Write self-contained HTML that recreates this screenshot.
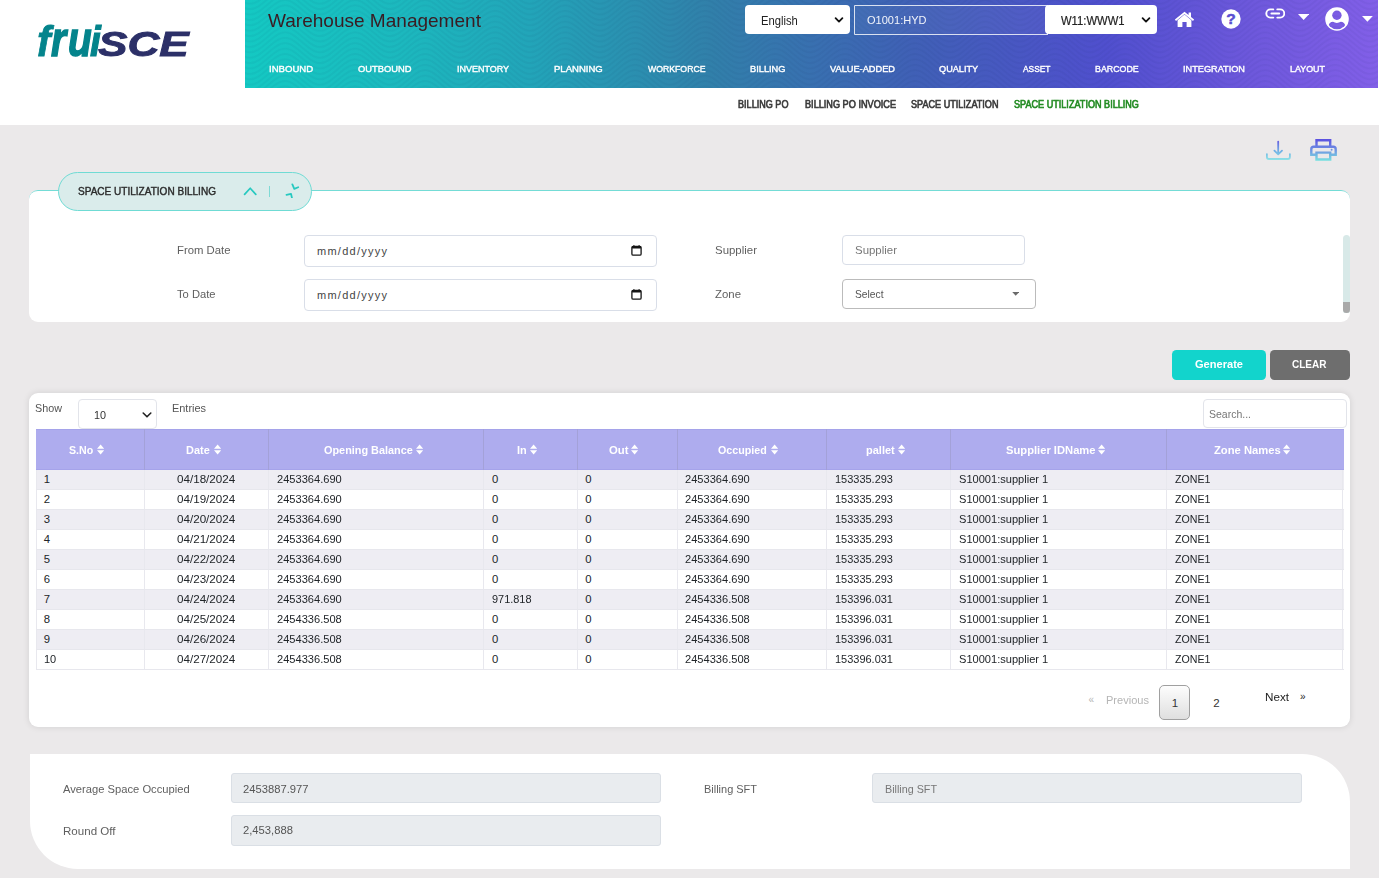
<!DOCTYPE html>
<html lang="en"><head><meta charset="utf-8"><title>Space Utilization Billing</title>
<style>
*{box-sizing:border-box;margin:0;padding:0}
html,body{width:1379px;height:878px;overflow:hidden}
body{position:relative;background:#ebe9ea;font-family:"Liberation Sans",sans-serif;font-size:12px;color:#333}
.t{position:absolute;white-space:nowrap}
.abs{position:absolute}
#top{position:absolute;left:0;top:0;width:1379px;height:124.5px;background:#fff}
#hdr{position:absolute;left:245px;top:0;width:1133px;height:87.5px;
 background:linear-gradient(to right,#14c9c3 0%,#1cb8be 14%,#22a5b9 25%,#3180aa 41%,#4060b6 59%,#504fce 76%,#6e58dc 89%,#825fe8 100%);overflow:hidden}
#hdr svg.wave{position:absolute;left:0;top:0}
.sel{position:absolute;background:#fff;border-radius:4px;height:29px;top:5px}
.card{position:absolute;background:#fff}
.inp{position:absolute;background:#fff;border:1px solid #d9dee8;border-radius:4px}
.ro{position:absolute;background:#e9ecef;border:1px solid #dadfe5;border-radius:3px}
table,thead,tbody,tr,th,td{display:block;position:absolute;border:0;font-weight:400;text-align:left}
h1,a,label,button{font-weight:400;text-decoration:none;color:inherit}
button{border:0;padding:0;font-family:inherit;display:block}
</style></head><body>

<header id="top">
<div class="abs" style="left:0;top:0;font-style:italic;font-weight:700;white-space:nowrap"><span style="position:absolute;left:37.00px;top:20.00px;font-size:43.00px;line-height:1;color:#04848c;transform-origin:0 50%;transform:scaleX(0.950);-webkit-text-stroke:0.80px #04848c">f</span><span style="position:absolute;left:50.80px;top:15.34px;font-size:48.50px;line-height:1;color:#04848c;transform-origin:0 50%;transform:scaleX(0.800);-webkit-text-stroke:1.50px #04848c">r</span><span style="position:absolute;left:67.50px;top:15.34px;font-size:48.50px;line-height:1;color:#04848c;transform-origin:0 50%;transform:scaleX(0.800);-webkit-text-stroke:1.50px #04848c">u</span><span style="position:absolute;left:89.50px;top:20.00px;font-size:43.00px;line-height:1;color:#04848c;transform-origin:0 50%;transform:scaleX(0.900);-webkit-text-stroke:1.20px #04848c">i</span><span style="position:absolute;left:98.00px;top:25.92px;font-size:35.30px;line-height:1;color:#2c3068;transform-origin:0 50%;transform:scaleX(1.250);-webkit-text-stroke:0.90px #2c3068">SCE</span></div>
<div id="hdr">
<svg class="wave" width="1133" height="88"><defs><pattern id="wv" width="70" height="5.4" patternUnits="userSpaceOnUse"><path d="M-30 -27.0 c12 0 23 20 35 20 s23 -20 35 -20 s23 20 35 20M-30 -21.6 c12 0 23 20 35 20 s23 -20 35 -20 s23 20 35 20M-30 -16.2 c12 0 23 20 35 20 s23 -20 35 -20 s23 20 35 20M-30 -10.8 c12 0 23 20 35 20 s23 -20 35 -20 s23 20 35 20M-30 -5.4 c12 0 23 20 35 20 s23 -20 35 -20 s23 20 35 20M-30 0.0 c12 0 23 20 35 20 s23 -20 35 -20 s23 20 35 20M-30 5.4 c12 0 23 20 35 20 s23 -20 35 -20 s23 20 35 20" fill="none" stroke="#00104a" stroke-opacity=".045" stroke-width="2"/></pattern></defs><rect width="1133" height="88" fill="url(#wv)"/></svg>
</div>
<h1 class="t" style="left:268.30px;top:9.20px;font-size:18.40px;line-height:24px;transform-origin:0 50%;transform:scaleX(1.0345);color:#3a1c22;">Warehouse Management</h1>
<nav>
<a class="t" style="left:269.00px;top:61.70px;font-size:9.80px;line-height:14px;transform-origin:0 50%;transform:scaleX(0.9784);color:#fff;-webkit-text-stroke:0.40px #fff;">INBOUND</a>
<a class="t" style="left:358.00px;top:61.70px;font-size:9.80px;line-height:14px;transform-origin:0 50%;transform:scaleX(0.9544);color:#fff;-webkit-text-stroke:0.40px #fff;">OUTBOUND</a>
<a class="t" style="left:456.50px;top:61.70px;font-size:9.80px;line-height:14px;transform-origin:0 50%;transform:scaleX(0.9148);color:#fff;-webkit-text-stroke:0.40px #fff;">INVENTORY</a>
<a class="t" style="left:553.75px;top:61.70px;font-size:9.80px;line-height:14px;transform-origin:0 50%;transform:scaleX(0.9735);color:#fff;-webkit-text-stroke:0.40px #fff;">PLANNING</a>
<a class="t" style="left:647.50px;top:61.70px;font-size:9.80px;line-height:14px;transform-origin:0 50%;transform:scaleX(0.8876);color:#fff;-webkit-text-stroke:0.40px #fff;">WORKFORCE</a>
<a class="t" style="left:749.50px;top:61.70px;font-size:9.80px;line-height:14px;transform-origin:0 50%;transform:scaleX(0.9446);color:#fff;-webkit-text-stroke:0.40px #fff;">BILLING</a>
<a class="t" style="left:829.50px;top:61.70px;font-size:9.80px;line-height:14px;transform-origin:0 50%;transform:scaleX(0.9421);color:#fff;-webkit-text-stroke:0.40px #fff;">VALUE-ADDED</a>
<a class="t" style="left:938.75px;top:61.70px;font-size:9.80px;line-height:14px;transform-origin:0 50%;transform:scaleX(0.9358);color:#fff;-webkit-text-stroke:0.40px #fff;">QUALITY</a>
<a class="t" style="left:1022.50px;top:61.70px;font-size:9.80px;line-height:14px;transform-origin:0 50%;transform:scaleX(0.8555);color:#fff;-webkit-text-stroke:0.40px #fff;">ASSET</a>
<a class="t" style="left:1095.00px;top:61.70px;font-size:9.80px;line-height:14px;transform-origin:0 50%;transform:scaleX(0.9028);color:#fff;-webkit-text-stroke:0.40px #fff;">BARCODE</a>
<a class="t" style="left:1183.20px;top:61.70px;font-size:9.80px;line-height:14px;transform-origin:0 50%;transform:scaleX(0.9359);color:#fff;-webkit-text-stroke:0.40px #fff;">INTEGRATION</a>
<a class="t" style="left:1290.00px;top:61.70px;font-size:9.80px;line-height:14px;transform-origin:0 50%;transform:scaleX(0.9099);color:#fff;-webkit-text-stroke:0.40px #fff;">LAYOUT</a>
</nav>
<nav>
<a class="t" style="left:738.25px;top:98.20px;font-size:10.30px;line-height:14px;transform-origin:0 50%;transform:scaleX(0.8818);color:#3a3a3a;-webkit-text-stroke:0.65px #3a3a3a;">BILLING PO</a>
<a class="t" style="left:804.50px;top:98.20px;font-size:10.30px;line-height:14px;transform-origin:0 50%;transform:scaleX(0.8884);color:#3a3a3a;-webkit-text-stroke:0.65px #3a3a3a;">BILLING PO INVOICE</a>
<a class="t" style="left:910.75px;top:98.20px;font-size:10.30px;line-height:14px;transform-origin:0 50%;transform:scaleX(0.8822);color:#3a3a3a;-webkit-text-stroke:0.65px #3a3a3a;">SPACE UTILIZATION</a>
<a class="t" style="left:1013.75px;top:98.20px;font-size:10.30px;line-height:14px;transform-origin:0 50%;transform:scaleX(0.8829);color:#228b22;-webkit-text-stroke:0.65px #228b22;">SPACE UTILIZATION BILLING</a>
</nav>
<div class="sel" style="left:744.5px;width:105px"></div>
<div class="t" style="left:760.50px;top:12.50px;font-size:12.00px;line-height:16px;transform-origin:0 50%;transform:scaleX(0.9350);color:#222;">English</div>
<svg class="abs" style="left:833px;top:15px" width="12" height="10" viewBox="0 0 12 10"><path d="M2.6 3.2 L6 6.6 L9.4 3.2" fill="none" stroke="#111" stroke-width="1.8" stroke-linecap="round" stroke-linejoin="round"/></svg>
<div class="abs" style="left:854px;top:5px;width:194px;height:29.5px;border:1px solid rgba(255,255,255,.8);border-radius:1px 0 0 1px;background:rgba(255,255,255,.04)"></div>
<div class="t" style="left:867.00px;top:11.80px;font-size:11.50px;line-height:16px;transform-origin:0 50%;transform:scaleX(0.9599);color:#f1f4fb;">O1001:HYD</div>
<div class="sel" style="left:1045.2px;width:111.5px"></div>
<div class="t" style="left:1060.80px;top:12.50px;font-size:12.00px;line-height:16px;transform-origin:0 50%;transform:scaleX(0.9374);color:#222;-webkit-text-stroke:0.20px #222;">W11:WWW1</div>
<svg class="abs" style="left:1140px;top:15px" width="12" height="10" viewBox="0 0 12 10"><path d="M2.6 3.2 L6 6.6 L9.4 3.2" fill="none" stroke="#111" stroke-width="1.8" stroke-linecap="round" stroke-linejoin="round"/></svg>
<svg class="abs" style="left:1174.2px;top:10.6px" width="21" height="16.5" viewBox="0 0 21 16.5"><path d="M10.5 3.6 L3.6 9.3 V15.6 a.6.6 0 0 0 .6.6 H8.4 V11 h4.2 v5.2 h4.2 a.6.6 0 0 0 .6-.6 V9.3 Z" fill="#fff"/><path d="M.9 8.6 L10.5 .7 L14.6 4.1 V1.5 h2.4 V6.1 L20.1 8.6 L19 9.9 L10.5 2.9 L2 9.9 Z" fill="#fff"/></svg>
<svg class="abs" style="left:1221.3px;top:9.4px" width="20" height="20" viewBox="0 0 20 20"><circle cx="10" cy="10" r="9.7" fill="#fff"/><text x="10" y="15.4" text-anchor="middle" font-family="Liberation Sans, sans-serif" font-weight="700" font-size="15.5" fill="#5b50d2" stroke="#5b50d2" stroke-width=".5">?</text></svg>
<svg class="abs" style="left:1264.8px;top:8.3px" width="20.6" height="11" viewBox="0 0 20.6 11"><path d="M8.3 1.4 H5.4 a4.1 4.1 0 0 0 0 8.2 H8.3 M12.3 1.4 h2.9 a4.1 4.1 0 0 1 0 8.2 h-2.9 M6.4 5.5 h7.8" fill="none" stroke="#fff" stroke-width="1.9" stroke-linecap="round"/></svg>
<svg class="abs" style="left:1297.6px;top:14px" width="11.2" height="6" viewBox="0 0 11.2 6"><path d="M0 0 H11.2 L5.6 6 Z" fill="#fff"/></svg>
<svg class="abs" style="left:1325.4px;top:7px" width="24" height="24" viewBox="0 0 24 24"><defs><clipPath id="uc"><circle cx="12" cy="12" r="10.3"/></clipPath><mask id="um"><rect width="24" height="24" fill="#000"/><circle cx="12" cy="12" r="11.8" fill="#fff"/><circle cx="11.9" cy="8.2" r="4.7" fill="#000"/><path clip-path="url(#uc)" d="M3.6 24 V19.2 C3.6 16.4 5.6 14.8 8 14.8 C9.2 15.5 10.4 15.9 11.9 15.9 S14.6 15.5 15.8 14.8 C18.2 14.8 20.2 16.4 20.2 19.2 V24 Z" fill="#000"/></mask></defs><rect width="24" height="24" fill="#fff" mask="url(#um)"/></svg>
<svg class="abs" style="left:1362.4px;top:16.2px" width="10.8" height="5.8" viewBox="0 0 10.8 5.8"><path d="M0 0 H10.8 L5.4 5.8 Z" fill="#fff"/></svg>
</header>
<svg class="abs" style="left:1264px;top:138px" width="28" height="24" viewBox="0 0 28 24"><defs><linearGradient id="g1" gradientUnits="userSpaceOnUse" x1="0" y1="2" x2="0" y2="22"><stop offset="0" stop-color="#6658e0"/><stop offset=".55" stop-color="#6fb0e6"/><stop offset="1" stop-color="#8fe3e6"/></linearGradient></defs><path d="M14.2 3.6 V16.2 M10.4 12.6 L14.2 16.4 L18 12.6" fill="none" stroke="url(#g1)" stroke-width="1.8" stroke-linecap="round" stroke-linejoin="round"/><path d="M2.9 16.2 V19 a2 2 0 0 0 2 2 H23.9 a2 2 0 0 0 2-2 V16.2" fill="none" stroke="url(#g1)" stroke-width="1.8" stroke-linecap="round"/></svg>
<svg class="abs" style="left:1309px;top:138px" width="29" height="24" viewBox="0 0 29 24"><defs><linearGradient id="g2" gradientUnits="userSpaceOnUse" x1="0" y1="1" x2="0" y2="23"><stop offset="0" stop-color="#5b4fe0"/><stop offset=".5" stop-color="#6f93e2"/><stop offset="1" stop-color="#78e3e0"/></linearGradient></defs><path d="M7.5 8.7 V2.2 H21.2 V8.7" fill="none" stroke="url(#g2)" stroke-width="2.4"/><path d="M7.5 16.7 H2.3 V11.2 a2.5 2.5 0 0 1 2.5-2.5 H24.2 a2.5 2.5 0 0 1 2.5 2.5 V16.7 H21.2" fill="none" stroke="url(#g2)" stroke-width="2.4"/><path d="M7.5 14.6 H21.2 V21.5 H7.5 Z" fill="none" stroke="url(#g2)" stroke-width="2.4"/><circle cx="22.6" cy="11.8" r="1" fill="#6f93e2"/></svg>
<div class="card" style="left:29px;top:189.5px;width:1321px;height:132px;border-radius:9px 9px 9px 9px;border-top:1.5px solid #74dcd6"></div>
<div class="abs" style="left:1342.5px;top:234.5px;width:7.5px;height:78px;background:#d8e9e8;border-radius:4px 4px 3px 3px"></div>
<div class="abs" style="left:1342.5px;top:302px;width:7.5px;height:10.5px;background:#a9a9a9;border-radius:0 0 4px 4px"></div>
<div class="abs" style="left:58px;top:171.5px;width:254px;height:39px;border-radius:20px;background:#daeceb;border:1.4px solid #6fdbd4"></div>
<div class="t" style="left:78.40px;top:184.80px;font-size:10.30px;line-height:14px;transform-origin:0 50%;transform:scaleX(0.9748);color:#2b2b2b;-webkit-text-stroke:0.40px #2b2b2b;">SPACE UTILIZATION BILLING</div>
<svg class="abs" style="left:243px;top:185px" width="14" height="12" viewBox="0 0 14 12"><path d="M1.6 9.4 L7.2 3.2 L12.8 9.4" fill="none" stroke="#27c9c0" stroke-width="1.7" stroke-linecap="round" stroke-linejoin="round"/></svg>
<div class="abs" style="left:268.5px;top:186px;width:1.4px;height:11.4px;background:#7fdad5"></div>
<svg class="abs" style="left:284px;top:182px" width="16" height="16" viewBox="0 0 16 16"><path d="M8.35 2.4 L10.3 6.9 L14.2 5.25 M2.5 12.8 L7 11.8 L8 16.1" fill="none" stroke="#27c9c0" stroke-width="1.8" stroke-linecap="round" stroke-linejoin="round"/></svg>
<label class="t" style="left:177.00px;top:241.70px;font-size:11.50px;line-height:16px;transform-origin:0 50%;transform:scaleX(0.9846);color:#5f5f5f;">From Date</label>
<label class="t" style="left:177.00px;top:286.00px;font-size:11.50px;line-height:16px;transform-origin:0 50%;transform:scaleX(0.9718);color:#5f5f5f;">To Date</label>
<div class="inp" style="left:303.7px;top:235px;width:353.6px;height:32px"></div>
<div class="inp" style="left:303.7px;top:279px;width:353.6px;height:31.5px"></div>
<div class="t" style="left:317.00px;top:242.70px;font-size:11.00px;line-height:16px;letter-spacing:1.257px;color:#444;">mm/dd/yyyy</div>
<div class="t" style="left:317.00px;top:286.60px;font-size:11.00px;line-height:16px;letter-spacing:1.257px;color:#444;">mm/dd/yyyy</div>
<svg class="abs" style="left:631.1px;top:245.1px" width="11" height="11" viewBox="0 0 11 11"><rect x="0.9" y="1.4" width="9.2" height="8.8" rx="1.3" fill="#fff" stroke="#151515" stroke-width="1.3"/><rect x="0.9" y="1.1" width="9.2" height="2.3" rx=".6" fill="#151515"/><rect x="2.3" y="0.2" width="1.2" height="1.6" fill="#151515"/><rect x="7.5" y="0.2" width="1.2" height="1.6" fill="#151515"/></svg>
<svg class="abs" style="left:631.1px;top:289.1px" width="11" height="11" viewBox="0 0 11 11"><rect x="0.9" y="1.4" width="9.2" height="8.8" rx="1.3" fill="#fff" stroke="#151515" stroke-width="1.3"/><rect x="0.9" y="1.1" width="9.2" height="2.3" rx=".6" fill="#151515"/><rect x="2.3" y="0.2" width="1.2" height="1.6" fill="#151515"/><rect x="7.5" y="0.2" width="1.2" height="1.6" fill="#151515"/></svg>
<label class="t" style="left:715.00px;top:241.80px;font-size:11.50px;line-height:16px;transform-origin:0 50%;transform:scaleX(0.9951);color:#5f5f5f;">Supplier</label>
<label class="t" style="left:715.00px;top:286.00px;font-size:11.50px;line-height:16px;transform-origin:0 50%;transform:scaleX(0.9916);color:#5f5f5f;">Zone</label>
<div class="inp" style="left:842.3px;top:235px;width:183px;height:29.5px"></div>
<div class="t" style="left:854.50px;top:242.30px;font-size:11.50px;line-height:16px;transform-origin:0 50%;transform:scaleX(0.9951);color:#777;">Supplier</div>
<div class="inp" style="left:842.3px;top:279px;width:193.5px;height:29.5px;border-color:#bbb"></div>
<div class="t" style="left:854.50px;top:285.80px;font-size:11.50px;line-height:16px;transform-origin:0 50%;transform:scaleX(0.8915);color:#555;">Select</div>
<svg class="abs" style="left:1011.5px;top:292.2px" width="7.4" height="3.8" viewBox="0 0 9 5"><path d="M0 0 H9 L4.5 5 Z" fill="#6a6a6a"/></svg>
<button class="abs" style="left:1172.3px;top:350.2px;width:93.5px;height:29.5px;background:#12d4cc;border-radius:4.5px"><span class="t" style="left:22.50px;top:5.90px;font-size:11.50px;line-height:16px;transform-origin:0 50%;transform:scaleX(0.9628);font-weight:700;color:#fff;">Generate</span></button>
<button class="abs" style="left:1270.2px;top:350.2px;width:79.8px;height:29.5px;background:#6e6e6e;border-radius:4.5px"><span class="t" style="left:22.30px;top:5.90px;font-size:11.50px;line-height:16px;transform-origin:0 50%;transform:scaleX(0.8708);font-weight:700;color:#fff;">CLEAR</span></button>
<div class="card" style="left:29.2px;top:393.4px;width:1320.8px;height:333.6px;border-radius:9px;box-shadow:0 0 7px rgba(0,0,0,.11)"></div>
<div class="t" style="left:34.60px;top:399.70px;font-size:11.50px;line-height:16px;transform-origin:0 50%;transform:scaleX(0.9373);color:#555;">Show</div>
<div class="inp" style="left:77.5px;top:399px;width:79.5px;height:29.5px;border-color:#e2e4ea"></div>
<div class="t" style="left:94.00px;top:406.50px;font-size:11.50px;line-height:16px;transform-origin:0 50%;transform:scaleX(0.9401);color:#333;">10</div>
<svg class="abs" style="left:140.5px;top:410px" width="12" height="10" viewBox="0 0 12 10"><path d="M2.2 3 L6 6.8 L9.8 3" fill="none" stroke="#222" stroke-width="1.6" stroke-linecap="round" stroke-linejoin="round"/></svg>
<div class="t" style="left:172.00px;top:400.00px;font-size:11.50px;line-height:16px;transform-origin:0 50%;transform:scaleX(0.9507);color:#555;">Entries</div>
<div class="inp" style="left:1203px;top:399px;width:143.5px;height:28.5px;border-color:#e2e4ea"></div>
<div class="t" style="left:1209.00px;top:406.00px;font-size:11.50px;line-height:16px;transform-origin:0 50%;transform:scaleX(0.9130);color:#777;">Search...</div>
<table style="left:35.75px;top:428.50px;width:1307.75px;height:241.40px">
<thead style="left:0;top:0;width:1307.75px;height:41.40px;background:#aeacee;box-shadow:inset 0 1px 0 #a5a3ea,inset 0 -1px 0 #a5a3ea"><tr style="left:0;top:0;width:100%;height:100%">
<th style="left:0.00px;top:0;width:108.50px;height:100%;"><span class="t" style="left:33.00px;top:13.10px;font-size:11.00px;line-height:16px;transform-origin:0 50%;transform:scaleX(0.9669);font-weight:700;color:#fff;">S.No</span><svg class="abs" style="left:61.25px;top:15.70px" width="7.2" height="11" viewBox="0 0 7.2 11"><path d="M0 4.7 L3.6 0.4 L7.2 4.7 Z M0 6.3 L3.6 10.6 L7.2 6.3 Z" fill="#fff"/></svg></th>
<th style="left:108.00px;top:0;width:124.00px;height:100%;box-shadow:inset 1px 0 0 #a3a1d8;"><span class="t" style="left:42.00px;top:13.10px;font-size:11.00px;line-height:16px;transform-origin:0 50%;transform:scaleX(0.9950);font-weight:700;color:#fff;">Date</span><svg class="abs" style="left:70.00px;top:15.70px" width="7.2" height="11" viewBox="0 0 7.2 11"><path d="M0 4.7 L3.6 0.4 L7.2 4.7 Z M0 6.3 L3.6 10.6 L7.2 6.3 Z" fill="#fff"/></svg></th>
<th style="left:232.00px;top:0;width:215.50px;height:100%;box-shadow:inset 1px 0 0 #a3a1d8;"><span class="t" style="left:55.75px;top:13.10px;font-size:11.00px;line-height:16px;transform-origin:0 50%;transform:scaleX(0.9881);font-weight:700;color:#fff;">Opening Balance</span><svg class="abs" style="left:148.05px;top:15.70px" width="7.2" height="11" viewBox="0 0 7.2 11"><path d="M0 4.7 L3.6 0.4 L7.2 4.7 Z M0 6.3 L3.6 10.6 L7.2 6.3 Z" fill="#fff"/></svg></th>
<th style="left:447.50px;top:0;width:93.75px;height:100%;box-shadow:inset 1px 0 0 #a3a1d8;"><span class="t" style="left:33.75px;top:13.10px;font-size:11.00px;line-height:16px;transform-origin:0 50%;transform:scaleX(0.9959);font-weight:700;color:#fff;">In</span><svg class="abs" style="left:47.05px;top:15.70px" width="7.2" height="11" viewBox="0 0 7.2 11"><path d="M0 4.7 L3.6 0.4 L7.2 4.7 Z M0 6.3 L3.6 10.6 L7.2 6.3 Z" fill="#fff"/></svg></th>
<th style="left:541.25px;top:0;width:99.50px;height:100%;box-shadow:inset 1px 0 0 #a3a1d8;"><span class="t" style="left:31.75px;top:13.10px;font-size:11.00px;line-height:16px;transform-origin:0 50%;transform:scaleX(1.0307);font-weight:700;color:#fff;">Out</span><svg class="abs" style="left:54.40px;top:15.70px" width="7.2" height="11" viewBox="0 0 7.2 11"><path d="M0 4.7 L3.6 0.4 L7.2 4.7 Z M0 6.3 L3.6 10.6 L7.2 6.3 Z" fill="#fff"/></svg></th>
<th style="left:640.75px;top:0;width:149.25px;height:100%;box-shadow:inset 1px 0 0 #a3a1d8;"><span class="t" style="left:41.75px;top:13.10px;font-size:11.00px;line-height:16px;transform-origin:0 50%;transform:scaleX(0.9730);font-weight:700;color:#fff;">Occupied</span><svg class="abs" style="left:94.40px;top:15.70px" width="7.2" height="11" viewBox="0 0 7.2 11"><path d="M0 4.7 L3.6 0.4 L7.2 4.7 Z M0 6.3 L3.6 10.6 L7.2 6.3 Z" fill="#fff"/></svg></th>
<th style="left:790.00px;top:0;width:124.50px;height:100%;box-shadow:inset 1px 0 0 #a3a1d8;"><span class="t" style="left:40.00px;top:13.10px;font-size:11.00px;line-height:16px;transform-origin:0 50%;transform:scaleX(1.0014);font-weight:700;color:#fff;">pallet</span><svg class="abs" style="left:71.95px;top:15.70px" width="7.2" height="11" viewBox="0 0 7.2 11"><path d="M0 4.7 L3.6 0.4 L7.2 4.7 Z M0 6.3 L3.6 10.6 L7.2 6.3 Z" fill="#fff"/></svg></th>
<th style="left:914.50px;top:0;width:215.75px;height:100%;box-shadow:inset 1px 0 0 #a3a1d8;"><span class="t" style="left:55.25px;top:13.10px;font-size:11.00px;line-height:16px;transform-origin:0 50%;transform:scaleX(1.0170);font-weight:700;color:#fff;">Supplier IDName</span><svg class="abs" style="left:148.05px;top:15.70px" width="7.2" height="11" viewBox="0 0 7.2 11"><path d="M0 4.7 L3.6 0.4 L7.2 4.7 Z M0 6.3 L3.6 10.6 L7.2 6.3 Z" fill="#fff"/></svg></th>
<th style="left:1130.25px;top:0;width:177.00px;height:100%;box-shadow:inset 1px 0 0 #a3a1d8;"><span class="t" style="left:47.50px;top:13.10px;font-size:11.00px;line-height:16px;transform-origin:0 50%;transform:scaleX(1.0207);font-weight:700;color:#fff;">Zone Names</span><svg class="abs" style="left:117.30px;top:15.70px" width="7.2" height="11" viewBox="0 0 7.2 11"><path d="M0 4.7 L3.6 0.4 L7.2 4.7 Z M0 6.3 L3.6 10.6 L7.2 6.3 Z" fill="#fff"/></svg></th>
</tr></thead>
<tbody style="left:0;top:41.40px;width:1307.75px;height:200.00px">
<tr style="left:0;top:0.00px;width:100%;height:20.00px;background:#eeedf3;border-bottom:1px solid #e7e7ed">
<td style="left:0.00px;top:0;width:108.50px;height:100%;box-shadow:inset 1px 0 0 #e8e8ee;"><span class="t" style="left:8.00px;top:1.30px;font-size:11.30px;line-height:16px;color:#212529;">1</span></td>
<td style="left:108.00px;top:0;width:124.00px;height:100%;box-shadow:inset 1px 0 0 #e8e8ee;"><span class="t" style="left:33.00px;top:1.30px;font-size:11.30px;line-height:16px;transform-origin:0 50%;transform:scaleX(1.0299);color:#212529;">04/18/2024</span></td>
<td style="left:232.00px;top:0;width:215.50px;height:100%;box-shadow:inset 1px 0 0 #e8e8ee;"><span class="t" style="left:9.00px;top:1.30px;font-size:11.30px;line-height:16px;transform-origin:0 50%;transform:scaleX(0.9819);color:#212529;">2453364.690</span></td>
<td style="left:447.50px;top:0;width:93.75px;height:100%;box-shadow:inset 1px 0 0 #e8e8ee;"><span class="t" style="left:8.75px;top:1.30px;font-size:11.30px;line-height:16px;color:#212529;">0</span></td>
<td style="left:541.25px;top:0;width:99.50px;height:100%;box-shadow:inset 1px 0 0 #e8e8ee;"><span class="t" style="left:8.30px;top:1.30px;font-size:11.30px;line-height:16px;color:#212529;">0</span></td>
<td style="left:640.75px;top:0;width:149.25px;height:100%;box-shadow:inset 1px 0 0 #e8e8ee;"><span class="t" style="left:8.20px;top:1.30px;font-size:11.30px;line-height:16px;transform-origin:0 50%;transform:scaleX(0.9819);color:#212529;">2453364.690</span></td>
<td style="left:790.00px;top:0;width:124.50px;height:100%;box-shadow:inset 1px 0 0 #e8e8ee;"><span class="t" style="left:8.75px;top:1.30px;font-size:11.30px;line-height:16px;transform-origin:0 50%;transform:scaleX(0.9712);color:#212529;">153335.293</span></td>
<td style="left:914.50px;top:0;width:215.75px;height:100%;box-shadow:inset 1px 0 0 #e8e8ee;"><span class="t" style="left:8.50px;top:1.30px;font-size:11.30px;line-height:16px;transform-origin:0 50%;transform:scaleX(0.9799);color:#212529;">S10001:supplier 1</span></td>
<td style="left:1130.25px;top:0;width:177.00px;height:100%;box-shadow:inset 1px 0 0 #e8e8ee,inset -1px 0 0 #e8e8ee;"><span class="t" style="left:8.75px;top:1.30px;font-size:11.30px;line-height:16px;transform-origin:0 50%;transform:scaleX(0.9420);color:#212529;">ZONE1</span></td>
</tr>
<tr style="left:0;top:20.00px;width:100%;height:20.00px;background:#ffffff;border-bottom:1px solid #e7e7ed">
<td style="left:0.00px;top:0;width:108.50px;height:100%;box-shadow:inset 1px 0 0 #e8e8ee;"><span class="t" style="left:8.00px;top:1.30px;font-size:11.30px;line-height:16px;color:#212529;">2</span></td>
<td style="left:108.00px;top:0;width:124.00px;height:100%;box-shadow:inset 1px 0 0 #e8e8ee;"><span class="t" style="left:33.00px;top:1.30px;font-size:11.30px;line-height:16px;transform-origin:0 50%;transform:scaleX(1.0299);color:#212529;">04/19/2024</span></td>
<td style="left:232.00px;top:0;width:215.50px;height:100%;box-shadow:inset 1px 0 0 #e8e8ee;"><span class="t" style="left:9.00px;top:1.30px;font-size:11.30px;line-height:16px;transform-origin:0 50%;transform:scaleX(0.9819);color:#212529;">2453364.690</span></td>
<td style="left:447.50px;top:0;width:93.75px;height:100%;box-shadow:inset 1px 0 0 #e8e8ee;"><span class="t" style="left:8.75px;top:1.30px;font-size:11.30px;line-height:16px;color:#212529;">0</span></td>
<td style="left:541.25px;top:0;width:99.50px;height:100%;box-shadow:inset 1px 0 0 #e8e8ee;"><span class="t" style="left:8.30px;top:1.30px;font-size:11.30px;line-height:16px;color:#212529;">0</span></td>
<td style="left:640.75px;top:0;width:149.25px;height:100%;box-shadow:inset 1px 0 0 #e8e8ee;"><span class="t" style="left:8.20px;top:1.30px;font-size:11.30px;line-height:16px;transform-origin:0 50%;transform:scaleX(0.9819);color:#212529;">2453364.690</span></td>
<td style="left:790.00px;top:0;width:124.50px;height:100%;box-shadow:inset 1px 0 0 #e8e8ee;"><span class="t" style="left:8.75px;top:1.30px;font-size:11.30px;line-height:16px;transform-origin:0 50%;transform:scaleX(0.9712);color:#212529;">153335.293</span></td>
<td style="left:914.50px;top:0;width:215.75px;height:100%;box-shadow:inset 1px 0 0 #e8e8ee;"><span class="t" style="left:8.50px;top:1.30px;font-size:11.30px;line-height:16px;transform-origin:0 50%;transform:scaleX(0.9799);color:#212529;">S10001:supplier 1</span></td>
<td style="left:1130.25px;top:0;width:177.00px;height:100%;box-shadow:inset 1px 0 0 #e8e8ee,inset -1px 0 0 #e8e8ee;"><span class="t" style="left:8.75px;top:1.30px;font-size:11.30px;line-height:16px;transform-origin:0 50%;transform:scaleX(0.9420);color:#212529;">ZONE1</span></td>
</tr>
<tr style="left:0;top:40.00px;width:100%;height:20.00px;background:#eeedf3;border-bottom:1px solid #e7e7ed">
<td style="left:0.00px;top:0;width:108.50px;height:100%;box-shadow:inset 1px 0 0 #e8e8ee;"><span class="t" style="left:8.00px;top:1.30px;font-size:11.30px;line-height:16px;color:#212529;">3</span></td>
<td style="left:108.00px;top:0;width:124.00px;height:100%;box-shadow:inset 1px 0 0 #e8e8ee;"><span class="t" style="left:33.00px;top:1.30px;font-size:11.30px;line-height:16px;transform-origin:0 50%;transform:scaleX(1.0299);color:#212529;">04/20/2024</span></td>
<td style="left:232.00px;top:0;width:215.50px;height:100%;box-shadow:inset 1px 0 0 #e8e8ee;"><span class="t" style="left:9.00px;top:1.30px;font-size:11.30px;line-height:16px;transform-origin:0 50%;transform:scaleX(0.9819);color:#212529;">2453364.690</span></td>
<td style="left:447.50px;top:0;width:93.75px;height:100%;box-shadow:inset 1px 0 0 #e8e8ee;"><span class="t" style="left:8.75px;top:1.30px;font-size:11.30px;line-height:16px;color:#212529;">0</span></td>
<td style="left:541.25px;top:0;width:99.50px;height:100%;box-shadow:inset 1px 0 0 #e8e8ee;"><span class="t" style="left:8.30px;top:1.30px;font-size:11.30px;line-height:16px;color:#212529;">0</span></td>
<td style="left:640.75px;top:0;width:149.25px;height:100%;box-shadow:inset 1px 0 0 #e8e8ee;"><span class="t" style="left:8.20px;top:1.30px;font-size:11.30px;line-height:16px;transform-origin:0 50%;transform:scaleX(0.9819);color:#212529;">2453364.690</span></td>
<td style="left:790.00px;top:0;width:124.50px;height:100%;box-shadow:inset 1px 0 0 #e8e8ee;"><span class="t" style="left:8.75px;top:1.30px;font-size:11.30px;line-height:16px;transform-origin:0 50%;transform:scaleX(0.9712);color:#212529;">153335.293</span></td>
<td style="left:914.50px;top:0;width:215.75px;height:100%;box-shadow:inset 1px 0 0 #e8e8ee;"><span class="t" style="left:8.50px;top:1.30px;font-size:11.30px;line-height:16px;transform-origin:0 50%;transform:scaleX(0.9799);color:#212529;">S10001:supplier 1</span></td>
<td style="left:1130.25px;top:0;width:177.00px;height:100%;box-shadow:inset 1px 0 0 #e8e8ee,inset -1px 0 0 #e8e8ee;"><span class="t" style="left:8.75px;top:1.30px;font-size:11.30px;line-height:16px;transform-origin:0 50%;transform:scaleX(0.9420);color:#212529;">ZONE1</span></td>
</tr>
<tr style="left:0;top:60.00px;width:100%;height:20.00px;background:#ffffff;border-bottom:1px solid #e7e7ed">
<td style="left:0.00px;top:0;width:108.50px;height:100%;box-shadow:inset 1px 0 0 #e8e8ee;"><span class="t" style="left:8.00px;top:1.30px;font-size:11.30px;line-height:16px;color:#212529;">4</span></td>
<td style="left:108.00px;top:0;width:124.00px;height:100%;box-shadow:inset 1px 0 0 #e8e8ee;"><span class="t" style="left:33.00px;top:1.30px;font-size:11.30px;line-height:16px;transform-origin:0 50%;transform:scaleX(1.0299);color:#212529;">04/21/2024</span></td>
<td style="left:232.00px;top:0;width:215.50px;height:100%;box-shadow:inset 1px 0 0 #e8e8ee;"><span class="t" style="left:9.00px;top:1.30px;font-size:11.30px;line-height:16px;transform-origin:0 50%;transform:scaleX(0.9819);color:#212529;">2453364.690</span></td>
<td style="left:447.50px;top:0;width:93.75px;height:100%;box-shadow:inset 1px 0 0 #e8e8ee;"><span class="t" style="left:8.75px;top:1.30px;font-size:11.30px;line-height:16px;color:#212529;">0</span></td>
<td style="left:541.25px;top:0;width:99.50px;height:100%;box-shadow:inset 1px 0 0 #e8e8ee;"><span class="t" style="left:8.30px;top:1.30px;font-size:11.30px;line-height:16px;color:#212529;">0</span></td>
<td style="left:640.75px;top:0;width:149.25px;height:100%;box-shadow:inset 1px 0 0 #e8e8ee;"><span class="t" style="left:8.20px;top:1.30px;font-size:11.30px;line-height:16px;transform-origin:0 50%;transform:scaleX(0.9819);color:#212529;">2453364.690</span></td>
<td style="left:790.00px;top:0;width:124.50px;height:100%;box-shadow:inset 1px 0 0 #e8e8ee;"><span class="t" style="left:8.75px;top:1.30px;font-size:11.30px;line-height:16px;transform-origin:0 50%;transform:scaleX(0.9712);color:#212529;">153335.293</span></td>
<td style="left:914.50px;top:0;width:215.75px;height:100%;box-shadow:inset 1px 0 0 #e8e8ee;"><span class="t" style="left:8.50px;top:1.30px;font-size:11.30px;line-height:16px;transform-origin:0 50%;transform:scaleX(0.9799);color:#212529;">S10001:supplier 1</span></td>
<td style="left:1130.25px;top:0;width:177.00px;height:100%;box-shadow:inset 1px 0 0 #e8e8ee,inset -1px 0 0 #e8e8ee;"><span class="t" style="left:8.75px;top:1.30px;font-size:11.30px;line-height:16px;transform-origin:0 50%;transform:scaleX(0.9420);color:#212529;">ZONE1</span></td>
</tr>
<tr style="left:0;top:80.00px;width:100%;height:20.00px;background:#eeedf3;border-bottom:1px solid #e7e7ed">
<td style="left:0.00px;top:0;width:108.50px;height:100%;box-shadow:inset 1px 0 0 #e8e8ee;"><span class="t" style="left:8.00px;top:1.30px;font-size:11.30px;line-height:16px;color:#212529;">5</span></td>
<td style="left:108.00px;top:0;width:124.00px;height:100%;box-shadow:inset 1px 0 0 #e8e8ee;"><span class="t" style="left:33.00px;top:1.30px;font-size:11.30px;line-height:16px;transform-origin:0 50%;transform:scaleX(1.0299);color:#212529;">04/22/2024</span></td>
<td style="left:232.00px;top:0;width:215.50px;height:100%;box-shadow:inset 1px 0 0 #e8e8ee;"><span class="t" style="left:9.00px;top:1.30px;font-size:11.30px;line-height:16px;transform-origin:0 50%;transform:scaleX(0.9819);color:#212529;">2453364.690</span></td>
<td style="left:447.50px;top:0;width:93.75px;height:100%;box-shadow:inset 1px 0 0 #e8e8ee;"><span class="t" style="left:8.75px;top:1.30px;font-size:11.30px;line-height:16px;color:#212529;">0</span></td>
<td style="left:541.25px;top:0;width:99.50px;height:100%;box-shadow:inset 1px 0 0 #e8e8ee;"><span class="t" style="left:8.30px;top:1.30px;font-size:11.30px;line-height:16px;color:#212529;">0</span></td>
<td style="left:640.75px;top:0;width:149.25px;height:100%;box-shadow:inset 1px 0 0 #e8e8ee;"><span class="t" style="left:8.20px;top:1.30px;font-size:11.30px;line-height:16px;transform-origin:0 50%;transform:scaleX(0.9819);color:#212529;">2453364.690</span></td>
<td style="left:790.00px;top:0;width:124.50px;height:100%;box-shadow:inset 1px 0 0 #e8e8ee;"><span class="t" style="left:8.75px;top:1.30px;font-size:11.30px;line-height:16px;transform-origin:0 50%;transform:scaleX(0.9712);color:#212529;">153335.293</span></td>
<td style="left:914.50px;top:0;width:215.75px;height:100%;box-shadow:inset 1px 0 0 #e8e8ee;"><span class="t" style="left:8.50px;top:1.30px;font-size:11.30px;line-height:16px;transform-origin:0 50%;transform:scaleX(0.9799);color:#212529;">S10001:supplier 1</span></td>
<td style="left:1130.25px;top:0;width:177.00px;height:100%;box-shadow:inset 1px 0 0 #e8e8ee,inset -1px 0 0 #e8e8ee;"><span class="t" style="left:8.75px;top:1.30px;font-size:11.30px;line-height:16px;transform-origin:0 50%;transform:scaleX(0.9420);color:#212529;">ZONE1</span></td>
</tr>
<tr style="left:0;top:100.00px;width:100%;height:20.00px;background:#ffffff;border-bottom:1px solid #e7e7ed">
<td style="left:0.00px;top:0;width:108.50px;height:100%;box-shadow:inset 1px 0 0 #e8e8ee;"><span class="t" style="left:8.00px;top:1.30px;font-size:11.30px;line-height:16px;color:#212529;">6</span></td>
<td style="left:108.00px;top:0;width:124.00px;height:100%;box-shadow:inset 1px 0 0 #e8e8ee;"><span class="t" style="left:33.00px;top:1.30px;font-size:11.30px;line-height:16px;transform-origin:0 50%;transform:scaleX(1.0299);color:#212529;">04/23/2024</span></td>
<td style="left:232.00px;top:0;width:215.50px;height:100%;box-shadow:inset 1px 0 0 #e8e8ee;"><span class="t" style="left:9.00px;top:1.30px;font-size:11.30px;line-height:16px;transform-origin:0 50%;transform:scaleX(0.9819);color:#212529;">2453364.690</span></td>
<td style="left:447.50px;top:0;width:93.75px;height:100%;box-shadow:inset 1px 0 0 #e8e8ee;"><span class="t" style="left:8.75px;top:1.30px;font-size:11.30px;line-height:16px;color:#212529;">0</span></td>
<td style="left:541.25px;top:0;width:99.50px;height:100%;box-shadow:inset 1px 0 0 #e8e8ee;"><span class="t" style="left:8.30px;top:1.30px;font-size:11.30px;line-height:16px;color:#212529;">0</span></td>
<td style="left:640.75px;top:0;width:149.25px;height:100%;box-shadow:inset 1px 0 0 #e8e8ee;"><span class="t" style="left:8.20px;top:1.30px;font-size:11.30px;line-height:16px;transform-origin:0 50%;transform:scaleX(0.9819);color:#212529;">2453364.690</span></td>
<td style="left:790.00px;top:0;width:124.50px;height:100%;box-shadow:inset 1px 0 0 #e8e8ee;"><span class="t" style="left:8.75px;top:1.30px;font-size:11.30px;line-height:16px;transform-origin:0 50%;transform:scaleX(0.9712);color:#212529;">153335.293</span></td>
<td style="left:914.50px;top:0;width:215.75px;height:100%;box-shadow:inset 1px 0 0 #e8e8ee;"><span class="t" style="left:8.50px;top:1.30px;font-size:11.30px;line-height:16px;transform-origin:0 50%;transform:scaleX(0.9799);color:#212529;">S10001:supplier 1</span></td>
<td style="left:1130.25px;top:0;width:177.00px;height:100%;box-shadow:inset 1px 0 0 #e8e8ee,inset -1px 0 0 #e8e8ee;"><span class="t" style="left:8.75px;top:1.30px;font-size:11.30px;line-height:16px;transform-origin:0 50%;transform:scaleX(0.9420);color:#212529;">ZONE1</span></td>
</tr>
<tr style="left:0;top:120.00px;width:100%;height:20.00px;background:#eeedf3;border-bottom:1px solid #e7e7ed">
<td style="left:0.00px;top:0;width:108.50px;height:100%;box-shadow:inset 1px 0 0 #e8e8ee;"><span class="t" style="left:8.00px;top:1.30px;font-size:11.30px;line-height:16px;color:#212529;">7</span></td>
<td style="left:108.00px;top:0;width:124.00px;height:100%;box-shadow:inset 1px 0 0 #e8e8ee;"><span class="t" style="left:33.00px;top:1.30px;font-size:11.30px;line-height:16px;transform-origin:0 50%;transform:scaleX(1.0299);color:#212529;">04/24/2024</span></td>
<td style="left:232.00px;top:0;width:215.50px;height:100%;box-shadow:inset 1px 0 0 #e8e8ee;"><span class="t" style="left:9.00px;top:1.30px;font-size:11.30px;line-height:16px;transform-origin:0 50%;transform:scaleX(0.9819);color:#212529;">2453364.690</span></td>
<td style="left:447.50px;top:0;width:93.75px;height:100%;box-shadow:inset 1px 0 0 #e8e8ee;"><span class="t" style="left:8.75px;top:1.30px;font-size:11.30px;line-height:16px;transform-origin:0 50%;transform:scaleX(0.9670);color:#212529;">971.818</span></td>
<td style="left:541.25px;top:0;width:99.50px;height:100%;box-shadow:inset 1px 0 0 #e8e8ee;"><span class="t" style="left:8.30px;top:1.30px;font-size:11.30px;line-height:16px;color:#212529;">0</span></td>
<td style="left:640.75px;top:0;width:149.25px;height:100%;box-shadow:inset 1px 0 0 #e8e8ee;"><span class="t" style="left:8.20px;top:1.30px;font-size:11.30px;line-height:16px;transform-origin:0 50%;transform:scaleX(0.9819);color:#212529;">2454336.508</span></td>
<td style="left:790.00px;top:0;width:124.50px;height:100%;box-shadow:inset 1px 0 0 #e8e8ee;"><span class="t" style="left:8.75px;top:1.30px;font-size:11.30px;line-height:16px;transform-origin:0 50%;transform:scaleX(0.9712);color:#212529;">153396.031</span></td>
<td style="left:914.50px;top:0;width:215.75px;height:100%;box-shadow:inset 1px 0 0 #e8e8ee;"><span class="t" style="left:8.50px;top:1.30px;font-size:11.30px;line-height:16px;transform-origin:0 50%;transform:scaleX(0.9799);color:#212529;">S10001:supplier 1</span></td>
<td style="left:1130.25px;top:0;width:177.00px;height:100%;box-shadow:inset 1px 0 0 #e8e8ee,inset -1px 0 0 #e8e8ee;"><span class="t" style="left:8.75px;top:1.30px;font-size:11.30px;line-height:16px;transform-origin:0 50%;transform:scaleX(0.9420);color:#212529;">ZONE1</span></td>
</tr>
<tr style="left:0;top:140.00px;width:100%;height:20.00px;background:#ffffff;border-bottom:1px solid #e7e7ed">
<td style="left:0.00px;top:0;width:108.50px;height:100%;box-shadow:inset 1px 0 0 #e8e8ee;"><span class="t" style="left:8.00px;top:1.30px;font-size:11.30px;line-height:16px;color:#212529;">8</span></td>
<td style="left:108.00px;top:0;width:124.00px;height:100%;box-shadow:inset 1px 0 0 #e8e8ee;"><span class="t" style="left:33.00px;top:1.30px;font-size:11.30px;line-height:16px;transform-origin:0 50%;transform:scaleX(1.0299);color:#212529;">04/25/2024</span></td>
<td style="left:232.00px;top:0;width:215.50px;height:100%;box-shadow:inset 1px 0 0 #e8e8ee;"><span class="t" style="left:9.00px;top:1.30px;font-size:11.30px;line-height:16px;transform-origin:0 50%;transform:scaleX(0.9819);color:#212529;">2454336.508</span></td>
<td style="left:447.50px;top:0;width:93.75px;height:100%;box-shadow:inset 1px 0 0 #e8e8ee;"><span class="t" style="left:8.75px;top:1.30px;font-size:11.30px;line-height:16px;color:#212529;">0</span></td>
<td style="left:541.25px;top:0;width:99.50px;height:100%;box-shadow:inset 1px 0 0 #e8e8ee;"><span class="t" style="left:8.30px;top:1.30px;font-size:11.30px;line-height:16px;color:#212529;">0</span></td>
<td style="left:640.75px;top:0;width:149.25px;height:100%;box-shadow:inset 1px 0 0 #e8e8ee;"><span class="t" style="left:8.20px;top:1.30px;font-size:11.30px;line-height:16px;transform-origin:0 50%;transform:scaleX(0.9819);color:#212529;">2454336.508</span></td>
<td style="left:790.00px;top:0;width:124.50px;height:100%;box-shadow:inset 1px 0 0 #e8e8ee;"><span class="t" style="left:8.75px;top:1.30px;font-size:11.30px;line-height:16px;transform-origin:0 50%;transform:scaleX(0.9712);color:#212529;">153396.031</span></td>
<td style="left:914.50px;top:0;width:215.75px;height:100%;box-shadow:inset 1px 0 0 #e8e8ee;"><span class="t" style="left:8.50px;top:1.30px;font-size:11.30px;line-height:16px;transform-origin:0 50%;transform:scaleX(0.9799);color:#212529;">S10001:supplier 1</span></td>
<td style="left:1130.25px;top:0;width:177.00px;height:100%;box-shadow:inset 1px 0 0 #e8e8ee,inset -1px 0 0 #e8e8ee;"><span class="t" style="left:8.75px;top:1.30px;font-size:11.30px;line-height:16px;transform-origin:0 50%;transform:scaleX(0.9420);color:#212529;">ZONE1</span></td>
</tr>
<tr style="left:0;top:160.00px;width:100%;height:20.00px;background:#eeedf3;border-bottom:1px solid #e7e7ed">
<td style="left:0.00px;top:0;width:108.50px;height:100%;box-shadow:inset 1px 0 0 #e8e8ee;"><span class="t" style="left:8.00px;top:1.30px;font-size:11.30px;line-height:16px;color:#212529;">9</span></td>
<td style="left:108.00px;top:0;width:124.00px;height:100%;box-shadow:inset 1px 0 0 #e8e8ee;"><span class="t" style="left:33.00px;top:1.30px;font-size:11.30px;line-height:16px;transform-origin:0 50%;transform:scaleX(1.0299);color:#212529;">04/26/2024</span></td>
<td style="left:232.00px;top:0;width:215.50px;height:100%;box-shadow:inset 1px 0 0 #e8e8ee;"><span class="t" style="left:9.00px;top:1.30px;font-size:11.30px;line-height:16px;transform-origin:0 50%;transform:scaleX(0.9819);color:#212529;">2454336.508</span></td>
<td style="left:447.50px;top:0;width:93.75px;height:100%;box-shadow:inset 1px 0 0 #e8e8ee;"><span class="t" style="left:8.75px;top:1.30px;font-size:11.30px;line-height:16px;color:#212529;">0</span></td>
<td style="left:541.25px;top:0;width:99.50px;height:100%;box-shadow:inset 1px 0 0 #e8e8ee;"><span class="t" style="left:8.30px;top:1.30px;font-size:11.30px;line-height:16px;color:#212529;">0</span></td>
<td style="left:640.75px;top:0;width:149.25px;height:100%;box-shadow:inset 1px 0 0 #e8e8ee;"><span class="t" style="left:8.20px;top:1.30px;font-size:11.30px;line-height:16px;transform-origin:0 50%;transform:scaleX(0.9819);color:#212529;">2454336.508</span></td>
<td style="left:790.00px;top:0;width:124.50px;height:100%;box-shadow:inset 1px 0 0 #e8e8ee;"><span class="t" style="left:8.75px;top:1.30px;font-size:11.30px;line-height:16px;transform-origin:0 50%;transform:scaleX(0.9712);color:#212529;">153396.031</span></td>
<td style="left:914.50px;top:0;width:215.75px;height:100%;box-shadow:inset 1px 0 0 #e8e8ee;"><span class="t" style="left:8.50px;top:1.30px;font-size:11.30px;line-height:16px;transform-origin:0 50%;transform:scaleX(0.9799);color:#212529;">S10001:supplier 1</span></td>
<td style="left:1130.25px;top:0;width:177.00px;height:100%;box-shadow:inset 1px 0 0 #e8e8ee,inset -1px 0 0 #e8e8ee;"><span class="t" style="left:8.75px;top:1.30px;font-size:11.30px;line-height:16px;transform-origin:0 50%;transform:scaleX(0.9420);color:#212529;">ZONE1</span></td>
</tr>
<tr style="left:0;top:180.00px;width:100%;height:20.00px;background:#ffffff;border-bottom:1px solid #e7e7ed">
<td style="left:0.00px;top:0;width:108.50px;height:100%;box-shadow:inset 1px 0 0 #e8e8ee;"><span class="t" style="left:8.00px;top:1.30px;font-size:11.30px;line-height:16px;transform-origin:0 50%;transform:scaleX(0.9727);color:#212529;">10</span></td>
<td style="left:108.00px;top:0;width:124.00px;height:100%;box-shadow:inset 1px 0 0 #e8e8ee;"><span class="t" style="left:33.00px;top:1.30px;font-size:11.30px;line-height:16px;transform-origin:0 50%;transform:scaleX(1.0299);color:#212529;">04/27/2024</span></td>
<td style="left:232.00px;top:0;width:215.50px;height:100%;box-shadow:inset 1px 0 0 #e8e8ee;"><span class="t" style="left:9.00px;top:1.30px;font-size:11.30px;line-height:16px;transform-origin:0 50%;transform:scaleX(0.9819);color:#212529;">2454336.508</span></td>
<td style="left:447.50px;top:0;width:93.75px;height:100%;box-shadow:inset 1px 0 0 #e8e8ee;"><span class="t" style="left:8.75px;top:1.30px;font-size:11.30px;line-height:16px;color:#212529;">0</span></td>
<td style="left:541.25px;top:0;width:99.50px;height:100%;box-shadow:inset 1px 0 0 #e8e8ee;"><span class="t" style="left:8.30px;top:1.30px;font-size:11.30px;line-height:16px;color:#212529;">0</span></td>
<td style="left:640.75px;top:0;width:149.25px;height:100%;box-shadow:inset 1px 0 0 #e8e8ee;"><span class="t" style="left:8.20px;top:1.30px;font-size:11.30px;line-height:16px;transform-origin:0 50%;transform:scaleX(0.9819);color:#212529;">2454336.508</span></td>
<td style="left:790.00px;top:0;width:124.50px;height:100%;box-shadow:inset 1px 0 0 #e8e8ee;"><span class="t" style="left:8.75px;top:1.30px;font-size:11.30px;line-height:16px;transform-origin:0 50%;transform:scaleX(0.9712);color:#212529;">153396.031</span></td>
<td style="left:914.50px;top:0;width:215.75px;height:100%;box-shadow:inset 1px 0 0 #e8e8ee;"><span class="t" style="left:8.50px;top:1.30px;font-size:11.30px;line-height:16px;transform-origin:0 50%;transform:scaleX(0.9799);color:#212529;">S10001:supplier 1</span></td>
<td style="left:1130.25px;top:0;width:177.00px;height:100%;box-shadow:inset 1px 0 0 #e8e8ee,inset -1px 0 0 #e8e8ee;"><span class="t" style="left:8.75px;top:1.30px;font-size:11.30px;line-height:16px;transform-origin:0 50%;transform:scaleX(0.9420);color:#212529;">ZONE1</span></td>
</tr>
</tbody></table>
<div class="t" style="left:1088.60px;top:692.30px;font-size:10.00px;line-height:16px;color:#b5b5b5;">«</div>
<div class="t" style="left:1105.50px;top:692.30px;font-size:11.50px;line-height:16px;transform-origin:0 50%;transform:scaleX(0.9612);color:#b5b5b5;">Previous</div>
<div class="abs" style="left:1159.2px;top:685.2px;width:30.8px;height:34.5px;border:1px solid #a0a0a0;border-radius:5px;background:linear-gradient(#fdfdfd,#dfdfdf)"></div>
<div class="t" style="left:1171.80px;top:694.60px;font-size:11.50px;line-height:16px;color:#333;">1</div>
<div class="t" style="left:1213.20px;top:694.60px;font-size:11.50px;line-height:16px;color:#333;">2</div>
<div class="t" style="left:1265.40px;top:689.00px;font-size:11.50px;line-height:16px;transform-origin:0 50%;transform:scaleX(1.0156);color:#222;">Next</div>
<div class="t" style="left:1300.00px;top:689.00px;font-size:10.00px;line-height:16px;color:#222;">»</div>
<div class="card" style="left:29.5px;top:753.8px;width:1320.5px;height:114.8px;border-radius:0 48px 0 48px"></div>
<label class="t" style="left:63.30px;top:780.80px;font-size:11.50px;line-height:16px;transform-origin:0 50%;transform:scaleX(0.9728);color:#5f5f5f;">Average Space Occupied</label>
<label class="t" style="left:63.30px;top:822.80px;font-size:11.50px;line-height:16px;transform-origin:0 50%;transform:scaleX(1.0056);color:#5f5f5f;">Round Off</label>
<div class="ro" style="left:230.5px;top:773px;width:430.5px;height:30.3px"></div>
<div class="ro" style="left:230.5px;top:815px;width:430.5px;height:30.5px"></div>
<div class="t" style="left:242.50px;top:780.60px;font-size:11.30px;line-height:16px;transform-origin:0 50%;transform:scaleX(0.9925);color:#555;">2453887.977</div>
<div class="t" style="left:242.50px;top:822.40px;font-size:11.30px;line-height:16px;transform-origin:0 50%;transform:scaleX(0.9943);color:#555;">2,453,888</div>
<label class="t" style="left:704.00px;top:780.80px;font-size:11.50px;line-height:16px;transform-origin:0 50%;transform:scaleX(0.9532);color:#5f5f5f;">Billing SFT</label>
<div class="ro" style="left:871.5px;top:773px;width:430px;height:30.3px"></div>
<div class="t" style="left:884.50px;top:780.80px;font-size:11.50px;line-height:16px;transform-origin:0 50%;transform:scaleX(0.9352);color:#777;">Billing SFT</div>
</body></html>
